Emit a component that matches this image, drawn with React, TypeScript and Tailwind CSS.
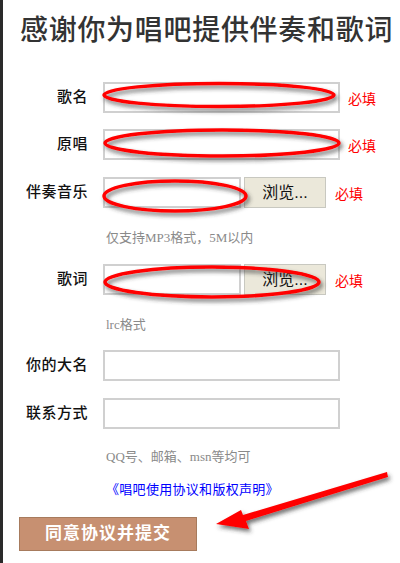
export default function App() {
  const sans = 'font-["Liberation_Sans","Noto_Sans_CJK_SC",sans-serif]';
  const serif = 'font-["Liberation_Serif","Noto_Sans_CJK_SC",serif]';

  const Label = ({ text }: { text: string }) => (
    <div className={`w-[85px] text-right text-[15px] font-medium tracking-[0.5px] text-[#111] ${sans}`}>{text}</div>
  );
  const Required = () => <span className={`text-[14px] text-[#ff0000] ${sans}`}>必填</span>;
  const TextInput = () => (
    <div className="w-[237px] h-[31px] border-2 border-[#d0d0d0] bg-white" />
  );
  const FileInput = () => (
    <div className="flex items-stretch h-[31px]">
      <div className="w-[138px] border-2 border-[#d0d0d0] bg-white" />
      <div className={`ml-[3px] w-[82px] flex items-center justify-center border border-[#c8c8c0] bg-[#ebe8da] text-[16px] text-[#111] ${sans}`}>
        浏览...
      </div>
    </div>
  );
  const Hint = ({ text, mt }: { text: string; mt: string }) => (
    <div className={`${mt} h-[20px] pl-[103px] flex items-center text-[13px] text-[#8a8a8a] ${serif}`}>{text}</div>
  );

  return (
    <div className="relative w-[400px] h-[563px] bg-white border-l-[3px] border-[#2a2a2a] overflow-hidden">
      <div className="flex flex-col">
        <div className={`h-[62px] flex items-center pl-[17px] text-[28px] font-medium tracking-[0.7px] text-[#333] ${sans}`}>
          感谢你为唱吧提供伴奏和歌词
        </div>

        <div className="mt-[20px] flex items-center">
          <Label text="歌名" />
          <div className="ml-[15px]"><TextInput /></div>
          <div className="ml-[8px]"><Required /></div>
        </div>

        <div className="mt-[16px] flex items-center">
          <Label text="原唱" />
          <div className="ml-[15px]"><TextInput /></div>
          <div className="ml-[8px]"><Required /></div>
        </div>

        <div className="mt-[17px] flex items-center">
          <Label text="伴奏音乐" />
          <div className="ml-[15px]"><FileInput /></div>
          <div className="ml-[9px]"><Required /></div>
        </div>
        <Hint text="仅支持MP3格式，5M以内" mt="mt-[20px]" />

        <div className="mt-[16px] flex items-center">
          <Label text="歌词" />
          <div className="ml-[15px]"><FileInput /></div>
          <div className="ml-[9px]"><Required /></div>
        </div>
        <Hint text="lrc格式" mt="mt-[20px]" />

        <div className="mt-[15px] flex items-center">
          <Label text="你的大名" />
          <div className="ml-[15px]"><TextInput /></div>
        </div>

        <div className="mt-[17px] flex items-center">
          <Label text="联系方式" />
          <div className="ml-[15px]"><TextInput /></div>
        </div>
        <Hint text="QQ号、邮箱、msn等均可" mt="mt-[18px]" />

        <div className={`mt-[13px] h-[20px] pl-[103px] flex items-center text-[13px] tracking-[0.3px] text-[#0000ff] ${sans}`}>
          《唱吧使用协议和版权声明》
        </div>

        <div className="mt-[17px] pl-[16px]">
          <button className={`w-[178px] h-[34px] border border-[#a77b5d] bg-[#c79071] text-white text-[17px] font-bold tracking-[1px] ${sans}`}>
            同意协议并提交
          </button>
        </div>
      </div>

      <svg className="absolute left-[-3px] top-0 pointer-events-none" width="400" height="563" viewBox="0 0 400 563">
        <defs>
          <filter id="sh" x="-20%" y="-50%" width="140%" height="200%">
            <feDropShadow dx="2" dy="3" stdDeviation="2.2" floodColor="#333" floodOpacity="0.7" />
          </filter>
        </defs>
        <g fill="none" stroke="#ff0000" strokeWidth="3.5" filter="url(#sh)">
          <ellipse cx="219" cy="95" rx="115" ry="11.5" />
          <ellipse cx="222" cy="143" rx="117" ry="13" />
          <ellipse cx="175" cy="196" rx="71" ry="15" />
          <ellipse cx="212" cy="282" rx="107" ry="15" />
        </g>
        <polygon
          points="216,524 241,510 243,515 387,472 388,477 246,521 249,529"
          fill="#ff0000"
          filter="url(#sh)"
        />
      </svg>
    </div>
  );
}
